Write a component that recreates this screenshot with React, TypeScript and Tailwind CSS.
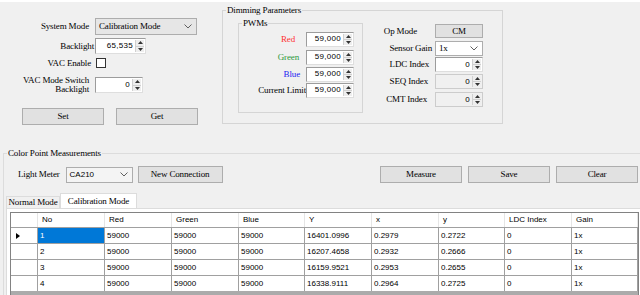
const serif = "font-['Liberation_Serif',serif] text-[9px] tracking-[-0.15px] leading-none";
const sans = "font-['Liberation_Sans',Arial,sans-serif] text-[8px] leading-none";

function Arrows() {
  return (
    <div className="flex w-[9px] shrink-0 flex-col border-l border-[#d0d0d0] bg-[#eeeeee]">
      <div className="flex flex-1 items-center justify-center border-b border-[#d0d0d0]">
        <svg width="5" height="3" viewBox="0 0 5 3"><path d="M0 3 L2.5 0 L5 3 Z" fill="#333" /></svg>
      </div>
      <div className="flex flex-1 items-center justify-center">
        <svg width="5" height="3" viewBox="0 0 5 3"><path d="M0 0 L2.5 3 L5 0 Z" fill="#333" /></svg>
      </div>
    </div>
  );
}

function Spin({ className, value, disabled }: { className: string; value: string; disabled?: boolean }) {
  return (
    <div
      className={`flex items-stretch border ${
        disabled ? 'border-[#cccccc] bg-[#f0f0f0]' : 'border-t-[#9c9c9c] border-l-[#9c9c9c] border-r-[#dedede] border-b-[#dedede] bg-white'
      } ${className}`}
    >
      <div className={`flex flex-1 items-center justify-end pr-[2px] text-black ${sans} text-[8.5px] tracking-[0.3px]`}>{value}</div>
      <div className="flex py-[1px] pr-[1px]"><Arrows /></div>
    </div>
  );
}

function Chevron() {
  return (
    <svg width="8" height="5" viewBox="0 0 8 5" className="shrink-0">
      <polyline points="0.5,0.5 4,4 7.5,0.5" fill="none" stroke="#606060" strokeWidth="1" />
    </svg>
  );
}

function Combo({ className, text, textClass }: { className: string; text: string; textClass: string }) {
  return (
    <div className={`flex items-center justify-between border border-[#adadad] pl-[3px] pr-[4px] ${className}`}>
      <span className={`text-black ${textClass}`}>{text}</span>
      <Chevron />
    </div>
  );
}

function Btn({ className, text }: { className: string; text: string }) {
  return (
    <div className={`flex items-center justify-center border border-[#adadad] bg-[#e1e1e1] text-black ${serif} ${className}`}>
      {text}
    </div>
  );
}

const cols = ['No', 'Red', 'Green', 'Blue', 'Y', 'x', 'y', 'LDC Index', 'Gain'];
const rows = [
  ['1', '59000', '59000', '59000', '16401.0996', '0.2979', '0.2722', '0', '1x'],
  ['2', '59000', '59000', '59000', '16207.4658', '0.2932', '0.2666', '0', '1x'],
  ['3', '59000', '59000', '59000', '16159.9521', '0.2953', '0.2655', '0', '1x'],
  ['4', '59000', '59000', '59000', '16338.9111', '0.2964', '0.2725', '0', '1x'],
];
const gridCols = 'grid grid-cols-[27px_67px_67px_67px_66px_67px_67px_66px_67px_66px]';

export default function App() {
  return (
    <div className="flex h-[295px] w-[640px] flex-col overflow-hidden border-t-2 border-white bg-[#f0f0f0] text-black">
      {/* top settings */}
      <div className="flex h-[128px] shrink-0">
        <div className="w-[222px] shrink-0 pt-[16px]">
          <div className="flex h-[17px] items-center">
            <div className={`w-[95px] pr-[6px] text-right ${serif}`}>System Mode</div>
            <Combo className="h-[17px] w-[102px] bg-[#e6e6e6]" text="Calibration Mode" textClass={serif} />
          </div>
          <div className="mt-[3px] flex h-[16px] items-center">
            <div className={`w-[95px] pr-[1px] text-right ${serif}`}>Backlight</div>
            <Spin className="h-[16px] w-[51px]" value="65,535" />
          </div>
          <div className="mt-[2px] flex h-[14px] items-center">
            <div className={`w-[95px] pr-[4px] text-right ${serif}`}>VAC Enable</div>
            <div className="ml-[1px] h-[10px] w-[10px] border border-[#333] bg-white" />
          </div>
          <div className="mt-[6px] flex h-[18px] items-center">
            <div className={`w-[95px] pr-[6px] text-right ${serif} leading-[9px]`}>
              VAC Mode Switch
              <br />
              Backlight
            </div>
            <Spin className="h-[16px] w-[48px]" value="0" />
          </div>
          <div className="mt-[14px] flex">
            <Btn className="ml-[22px] h-[17px] w-[82px]" text="Set" />
            <Btn className="ml-[12px] h-[17px] w-[82px]" text="Get" />
          </div>
        </div>

        {/* Dimming Parameters */}
        <div className="relative mt-[8px] flex h-[114px] w-[281px] shrink-0 border border-[#d5d5d5]">
          <span className={`absolute -top-[5px] left-[3px] bg-[#f0f0f0] px-[1px] ${serif}`}>Dimming Parameters</span>
          <div className="relative ml-[15px] mt-[12px] h-[90px] w-[125px] shrink-0 border border-[#d5d5d5]">
            <span className={`absolute -top-[5px] left-[3px] bg-[#f0f0f0] px-[1px] ${serif}`}>PWMs</span>
            <div className="mt-[8px] flex h-[14px] items-center">
              <div className={`w-[67px] pr-[11px] text-right text-[#ff3030] ${serif}`}>Red</div>
              <Spin className="h-[15px] w-[48px]" value="59,000" />
            </div>
            <div className="mt-[4px] flex h-[14px] items-center">
              <div className={`w-[67px] pr-[7px] text-right text-[#2e9a3c] ${serif}`}>Green</div>
              <Spin className="h-[15px] w-[48px]" value="59,000" />
            </div>
            <div className="mt-[3px] flex h-[14px] items-center">
              <div className={`w-[67px] pr-[6px] text-right text-[#1c1cf0] ${serif}`}>Blue</div>
              <Spin className="h-[15px] w-[48px]" value="59,000" />
            </div>
            <div className="mt-[2px] flex h-[14px] items-center">
              <div className={`w-[67px] whitespace-nowrap text-right ${serif}`}>Current Limit</div>
              <Spin className="h-[15px] w-[48px]" value="59,000" />
            </div>
          </div>
          <div className="ml-[6px] mt-[13px]">
            <div className="flex h-[14px] items-center">
              <div className={`w-[66px] pr-[18px] text-right ${serif}`}>Op Mode</div>
              <Btn className="h-[14px] w-[48px]" text="CM" />
            </div>
            <div className="mt-[3px] flex h-[15px] items-center">
              <div className={`w-[66px] pr-[3px] text-right ${serif}`}>Sensor Gain</div>
              <Combo className="h-[15px] w-[48px] bg-white" text="1x" textClass={serif} />
            </div>
            <div className="mt-[1px] flex h-[15px] items-center">
              <div className={`w-[66px] pr-[6px] text-right ${serif}`}>LDC Index</div>
              <Spin className="h-[15px] w-[48px]" value="0" />
            </div>
            <div className="mt-[2px] flex h-[15px] items-center">
              <div className={`w-[66px] pr-[7px] text-right ${serif}`}>SEQ Index</div>
              <Spin className="h-[15px] w-[48px]" value="0" disabled />
            </div>
            <div className="mt-[3px] flex h-[15px] items-center">
              <div className={`w-[66px] pr-[8px] text-right ${serif}`}>CMT Index</div>
              <Spin className="h-[15px] w-[48px]" value="0" disabled />
            </div>
          </div>
        </div>
      </div>

      {/* Color Point Measurements */}
      <div className="relative ml-[3px] mt-[23px] flex flex-1 flex-col border-l border-t border-[#dcdcdc]">
        <span className={`absolute -top-[5px] left-[3px] bg-[#f0f0f0] px-[1px] ${serif}`}>Color Point Measurements</span>
        <div className="mt-[12px] flex h-[17px] items-center">
          <div className={`ml-[14px] ${serif}`}>Light Meter</div>
          <Combo className="ml-[6px] h-[16px] w-[67px] bg-[#f4f4f4]" text="CA210" textClass={sans} />
          <Btn className="ml-[5px] h-[17px] w-[85px]" text="New Connection" />
          <div className="ml-auto flex gap-[6px] pr-[2px]">
            <Btn className="h-[17px] w-[82px]" text="Measure" />
            <Btn className="h-[17px] w-[82px]" text="Save" />
            <Btn className="h-[17px] w-[82px]" text="Clear" />
          </div>
        </div>

        {/* tabs */}
        <div className="mt-[10px] flex h-[15px] items-end pl-[2px]">
          <div className={`flex h-[12px] w-[54px] items-center justify-center border border-b-0 border-[#dcdcdc] bg-[#f0f0f0] ${serif} text-[8.5px]`}>
            Normal Mode
          </div>
          <div className={`flex h-[15px] w-[77px] items-center justify-center border border-b-0 border-[#dcdcdc] bg-white ${serif}`}>
            Calibration Mode
          </div>
        </div>
        <div className="ml-[2px] flex-1 border-l border-t border-[#dcdcdc] bg-white pl-[3px] pt-[3px]">
          <div className="h-[90px] w-[629px] border border-[#828282] bg-[#ababab]">
            <div className={`${gridCols} h-[14px] bg-white`}>
              <div className="border-r border-[#e5e5e5]" />
              {cols.map((c) => (
                <div key={c} className={`flex items-center border-r border-[#e5e5e5] pl-[4px] ${sans}`}>
                  {c}
                </div>
              ))}
            </div>
            {rows.map((r, i) => (
              <div key={i} className={`${gridCols} h-[16px] bg-white`}>
                <div className="flex items-center border-r border-t border-[#a0a0a0] pl-[5px]">
                  {i === 0 && (
                    <svg width="4" height="6" viewBox="0 0 4 6"><path d="M0 0 L4 3 L0 6 Z" fill="#000" /></svg>
                  )}
                </div>
                {r.map((v, j) => (
                  <div
                    key={j}
                    className={`flex items-center border-r border-t border-[#a0a0a0] pl-[2px] ${sans} ${
                      i === 0 && j === 0 ? 'bg-[#0078d7] text-white' : 'text-black'
                    }`}
                  >
                    {v}
                  </div>
                ))}
              </div>
            ))}
          </div>
        </div>
      </div>
    </div>
  );
}
